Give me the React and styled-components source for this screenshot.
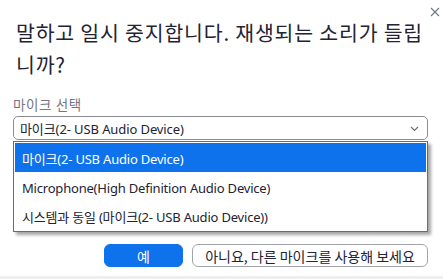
import React from 'react';
import styled, { createGlobalStyle } from 'styled-components';

const GlobalStyle = createGlobalStyle`
  html, body {
    margin: 0;
    padding: 0;
    background: #ffffff;
  }
  body {
    font-family: "Noto Sans", "Noto Sans CJK KR", sans-serif;
    color: #232333;
  }
`;

const Dialog = styled.div`
  width: 443px;
  height: 279px;
  box-sizing: border-box;
  display: flex;
  flex-direction: column;
  background: #ffffff;
  overflow: hidden;
`;

const TopBar = styled.div`
  display: flex;
  justify-content: flex-end;
  height: 16px;
  padding: 5px 1px 0 0;
  box-sizing: border-box;
`;

const CloseButton = styled.button`
  border: none;
  background: none;
  padding: 0;
  width: 14px;
  height: 14px;
  display: flex;
  align-items: center;
  justify-content: center;
  color: #6e7680;
`;

const Body = styled.div`
  flex: 1;
  display: flex;
  flex-direction: column;
  padding: 0 15px 0 13px;
`;

const Title = styled.h1`
  margin: 0;
  padding-left: 3px;
  font-family: "Noto Sans CJK KR", sans-serif;
  font-weight: 400;
  font-size: 20.5px;
  letter-spacing: 0.8px;
  line-height: 32px;
  color: #232333;
`;

const Label = styled.div`
  margin-top: 16px;
  font-family: "Noto Sans CJK KR", sans-serif;
  font-size: 13.5px;
  letter-spacing: 0.6px;
  line-height: 16px;
  color: #747487;
`;

const SelectWrap = styled.div`
  position: relative;
  margin-top: 4px;
`;

const SelectBox = styled.div`
  height: 24px;
  box-sizing: border-box;
  border: 1px solid #8b8b95;
  border-radius: 5px;
  display: flex;
  align-items: center;
  justify-content: space-between;
  padding: 1px 8px 0 6px;
  font-size: 13px;
  letter-spacing: -0.1px;
  color: #232333;
`;

const Menu = styled.ul`
  position: absolute;
  left: 0;
  right: 0;
  top: 25px;
  margin: 0;
  padding: 1px;
  list-style: none;
  background: #ffffff;
  border: 1px solid #6b6b6b;
  box-shadow: 3px 3px 3px rgba(0, 0, 0, 0.35);
`;

const MenuItem = styled.li`
  height: 29px;
  box-sizing: border-box;
  display: flex;
  align-items: center;
  padding: 2px 0 0 7px;
  font-size: 13px;
  letter-spacing: -0.2px;
  background: ${(p) => (p.$active ? '#0e72ed' : 'transparent')};
  color: ${(p) => (p.$active ? '#ffffff' : '#232333')};
`;

const Footer = styled.div`
  display: flex;
  justify-content: flex-end;
  gap: 9px;
  margin-top: 104px;
`;

const Button = styled.button`
  height: 23px;
  box-sizing: border-box;
  border-radius: 6px;
  font-family: "Noto Sans CJK KR", sans-serif;
  font-size: 14px;
  padding: 0 12px;
  border: 1px solid ${(p) => (p.$primary ? '#0e72ed' : '#a3a3ab')};
  background: ${(p) => (p.$primary ? '#0e72ed' : '#ffffff')};
  color: ${(p) => (p.$primary ? '#ffffff' : '#232333')};
  width: ${(p) => p.$width}px;
  display: flex;
  align-items: center;
  justify-content: center;
`;

const BottomStrip = styled.div`
  height: 3px;
  background: #eeeeee;
`;

const menuOptions = [
  '마이크(2- USB Audio Device)',
  'Microphone(High Definition Audio Device)',
  '시스템과 동일 (마이크(2- USB Audio Device))',
];

const App = () => {
  return (
    <>
      <GlobalStyle />
      <Dialog>
        <TopBar>
          <CloseButton aria-label="close">
            <svg width="10" height="10" viewBox="0 0 10 10">
              <path d="M1 1L9 9M9 1L1 9" stroke="currentColor" strokeWidth="1.1" />
            </svg>
          </CloseButton>
        </TopBar>
        <Body>
          <Title>말하고 일시 중지합니다. 재생되는 소리가 들립니까?</Title>
          <Label>마이크 선택</Label>
          <SelectWrap>
            <SelectBox>
              <span>마이크(2- USB Audio Device)</span>
              <svg width="9" height="6" viewBox="0 0 9 6">
                <path d="M1 1L4.5 4.5L8 1" stroke="#6e6e78" strokeWidth="1.2" fill="none" />
              </svg>
            </SelectBox>
            <Menu>
              {menuOptions.map((opt, i) => (
                <MenuItem key={opt} $active={i === 0}>
                  {opt}
                </MenuItem>
              ))}
            </Menu>
          </SelectWrap>
          <Footer>
            <Button $primary $width={79}>예</Button>
            <Button $width={236}>아니요, 다른 마이크를 사용해 보세요</Button>
          </Footer>
        </Body>
        <BottomStrip />
      </Dialog>
    </>
  );
};

export default App;
